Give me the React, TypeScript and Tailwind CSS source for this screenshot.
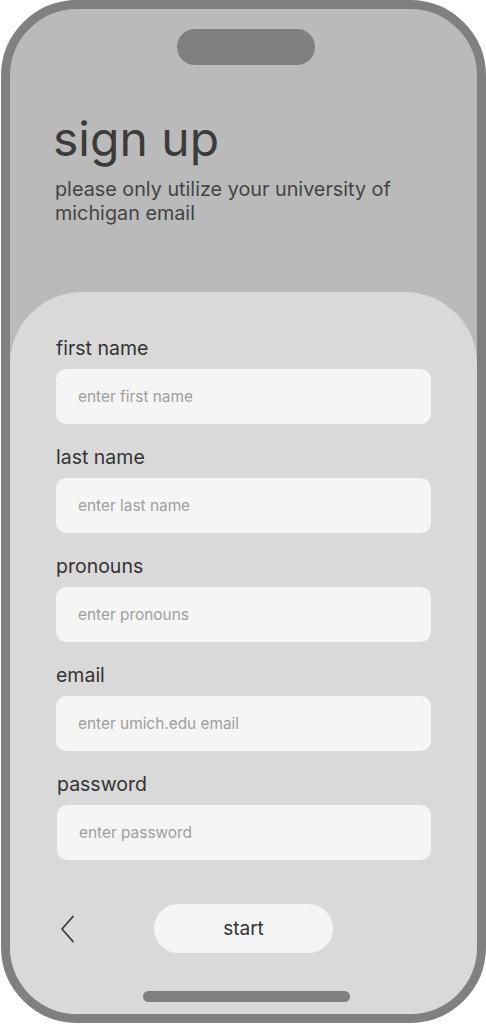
import React from "react";

const fields = [
  { label: "first name", placeholder: "enter first name" },
  { label: "last name", placeholder: "enter last name" },
  { label: "pronouns", placeholder: "enter pronouns" },
  { label: "email", placeholder: "enter umich.edu email" },
  { label: "password", placeholder: "enter password", nudge: true },
];

export default function App() {
  return (
    <div className="w-[486px] h-[1024px] bg-white font-['Inter','Noto_Sans',sans-serif]">
      {/* phone frame */}
      <div className="ml-[1px] w-[485px] h-[1023px] rounded-[76px] border-[9px] border-[#808080] bg-[#bababa] overflow-hidden flex flex-col">
        {/* notch */}
        <div className="mt-[20px] ml-[167px] w-[138px] h-[36px] rounded-full bg-[#808080] shrink-0" />

        {/* header */}
        <div className="pl-[43px] pr-[40px] shrink-0">
          <h1 className="mt-[50px] text-[48px] leading-[48px] text-[#3b3b3b] font-normal">sign up</h1>
          <p className="mt-[14px] ml-[2px] text-[19.8px] leading-[24px] text-[#444444] w-[360px]">
            please only utilize your university of michigan email
          </p>
        </div>

        {/* form card */}
        <div className="mt-auto h-[722px] bg-[#d9d9d9] rounded-t-[72px] pt-[44px] pl-[46px] pr-[46px] flex flex-col">
          <div className="flex flex-col gap-[21px]">
            {fields.map((f) => (
              <div key={f.label} className={f.nudge ? "flex flex-col ml-[1px]" : "flex flex-col"}>
                <label className="text-[19.5px] leading-[24px] text-[#333333]">{f.label}</label>
                <div className="mt-[9px] h-[55px] rounded-[10px] bg-[#f5f5f5] flex items-center pl-[22px] pt-[1px] text-[15.4px] text-[#9e9e9e]">
                  {f.placeholder}
                </div>
              </div>
            ))}
          </div>

          {/* actions */}
          <div className="mt-[44px] flex items-center">
            <svg width="16" height="28" viewBox="0 0 16 28" className="ml-[4px]" fill="none">
              <path d="M13 1.5 L2 14 L13 26.5" stroke="#3a3a3a" strokeWidth="1.8" strokeLinecap="round" strokeLinejoin="round" />
            </svg>
            <button className="ml-[78px] w-[179px] h-[49px] rounded-full bg-[#f5f5f5] pt-[1px] text-[19px] text-[#333333]">
              start
            </button>
          </div>

          {/* home indicator */}
          <div className="mt-[38px] ml-[87px] w-[207px] h-[11px] rounded-full bg-[#808080]" />
        </div>
      </div>
    </div>
  );
}
